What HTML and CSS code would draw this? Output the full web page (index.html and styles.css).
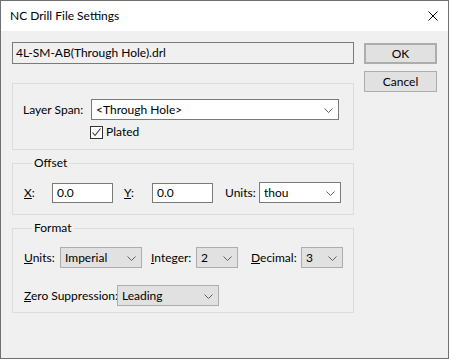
FILE: index.html
```html
<!DOCTYPE html>
<html lang="en">
<head>
    <meta charset="UTF-8">
    <title>NC Drill File Settings</title>
    <link rel="stylesheet" href="styles.css">
</head>
<body>
    <div class="window">
        <div class="titlebar">
            <span class="title">NC Drill File Settings</span>
            <svg class="close" width="10" height="10" viewBox="0 0 10 10">
                <path d="M0.5 0.5 L9.5 9.5 M9.5 0.5 L0.5 9.5" stroke="#000" stroke-width="1" fill="none"/>
            </svg>
        </div>
        <div class="content">
            <div class="main">
                <div class="filename">4L-SM-AB(Through Hole).drl</div>

                <div class="group span-group">
                    <div class="row">
                        <span class="label w-span">Layer Span:</span>
                        <div class="combo edit-combo w-layer">
                            <span>&lt;Through Hole&gt;</span>
                            <svg class="chev" width="9" height="5" viewBox="0 0 9 5"><path d="M0.5 0.5 L4.5 4.5 L8.5 0.5" stroke="#606060" fill="none"/></svg>
                        </div>
                    </div>
                    <div class="check-row">
                        <span class="checkbox">
                            <svg width="11" height="11" viewBox="0 0 11 11"><path d="M1.5 5.5 L4 8.5 L9.5 1.5" stroke="#333" stroke-width="1.1" fill="none"/></svg>
                        </span>
                        <span class="check-label">Plated</span>
                    </div>
                </div>

                <fieldset class="group offset-group">
                    <legend>Offset</legend>
                    <div class="row">
                        <span class="label w-xy"><u>X</u>:</span>
                        <div class="edit w-num">0.0</div>
                        <span class="label w-xy gap-y"><u>Y</u>:</span>
                        <div class="edit w-num">0.0</div>
                        <span class="label w-units gap-units">Units:</span>
                        <div class="combo edit-combo w-unitsbox">
                            <span>thou</span>
                            <svg class="chev" width="9" height="5" viewBox="0 0 9 5"><path d="M0.5 0.5 L4.5 4.5 L8.5 0.5" stroke="#606060" fill="none"/></svg>
                        </div>
                    </div>
                </fieldset>

                <fieldset class="group format-group">
                    <legend>Format</legend>
                    <div class="row">
                        <span class="label w-funits"><u>U</u>nits:</span>
                        <div class="combo list-combo w-imperial">
                            <span>Imperial</span>
                            <svg class="chev" width="9" height="5" viewBox="0 0 9 5"><path d="M0.5 0.5 L4.5 4.5 L8.5 0.5" stroke="#606060" fill="none"/></svg>
                        </div>
                        <span class="label w-int gap-int"><u>I</u>nteger:</span>
                        <div class="combo list-combo w-small">
                            <span>2</span>
                            <svg class="chev" width="9" height="5" viewBox="0 0 9 5"><path d="M0.5 0.5 L4.5 4.5 L8.5 0.5" stroke="#606060" fill="none"/></svg>
                        </div>
                        <span class="label w-dec gap-dec"><u>D</u>ecimal:</span>
                        <div class="combo list-combo w-small">
                            <span>3</span>
                            <svg class="chev" width="9" height="5" viewBox="0 0 9 5"><path d="M0.5 0.5 L4.5 4.5 L8.5 0.5" stroke="#606060" fill="none"/></svg>
                        </div>
                    </div>
                    <div class="row zero-row">
                        <span class="label w-zero"><u>Z</u>ero Suppression:</span>
                        <div class="combo list-combo w-zerobox">
                            <span>Leading</span>
                            <svg class="chev" width="9" height="5" viewBox="0 0 9 5"><path d="M0.5 0.5 L4.5 4.5 L8.5 0.5" stroke="#606060" fill="none"/></svg>
                        </div>
                    </div>
                </fieldset>
            </div>

            <div class="buttons">
                <button class="btn default">OK</button>
                <button class="btn">Cancel</button>
            </div>
        </div>
    </div>
</body>
</html>
```

FILE: styles.css
```css
* {
    margin: 0;
    padding: 0;
    box-sizing: border-box;
}

body {
    font-family: 'Lato', 'Segoe UI', sans-serif;
    font-size: 12px;
    line-height: 14px;
    color: #000000;
    background-color: #f0f0f0;
}

.window {
    width: 449px;
    height: 359px;
    border: 1px solid #707070;
    background-color: #f0f0f0;
    display: flex;
    flex-direction: column;
}

.titlebar {
    height: 30px;
    background-color: #ffffff;
    display: flex;
    align-items: center;
    justify-content: space-between;
    padding: 0 10px 0 9px;
}

.title {
    font-size: 12px;
    margin-top: -1px;
}

.close {
    display: block;
    margin-top: -1px;
}

.content {
    display: flex;
    gap: 10px;
    padding: 11px 10px 0 11px;
}

.main {
    width: 342px;
    display: flex;
    flex-direction: column;
}

.filename {
    height: 22px;
    border: 1px solid #7a7a7a;
    background-color: #f0f0f0;
    padding: 3px 3px 0 3px;
}

.group {
    border: 1px solid #dcdcdc;
    border-radius: 0;
}

.span-group {
    margin-top: 19px;
    padding: 15px 0 10px 10px;
}

fieldset.group {
    margin-top: 6px;
    min-width: 0;
}

legend {
    margin-left: 8px;
    padding: 0 2px;
    line-height: 14px;
}

.offset-group {
    padding: 12px 0 11px 11px;
}

.format-group {
    padding: 12px 0 6px 11px;
}

.row {
    display: flex;
    align-items: center;
}

.zero-row {
    margin-top: 17px;
}

.label {
    white-space: nowrap;
}

.w-span { width: 68px; }
.w-xy { width: 28px; }
.w-units { width: 34px; }
.w-funits { width: 36px; }
.w-int { width: 45px; }
.w-dec { width: 50px; }
.w-zero { width: 93px; }

.gap-y { margin-left: 11px; }
.gap-units { margin-left: 12px; }
.gap-int { margin-left: 9px; }
.gap-dec { margin-left: 13px; }

.edit {
    height: 20px;
    border: 1px solid #7a7a7a;
    background-color: #ffffff;
    padding: 2px 0 0 4px;
}

.w-num { width: 61px; }

.combo {
    height: 21px;
    display: flex;
    align-items: center;
    justify-content: space-between;
    padding: 1px 5px 0 4px;
}

.combo .chev {
    display: block;
}

.edit-combo {
    border: 1px solid #7a7a7a;
    background-color: #ffffff;
}

.list-combo {
    border: 1px solid #adadad;
    background-color: #e1e1e1;
}

.w-layer { width: 248px; }
.w-unitsbox { width: 82px; }
.w-imperial { width: 82px; }
.w-small { width: 42px; }
.w-zerobox { width: 102px; }

.check-row {
    display: flex;
    align-items: center;
    margin-top: 5px;
    margin-left: 67px;
}

.checkbox {
    width: 13px;
    height: 13px;
    border: 1px solid #333333;
    background-color: #ffffff;
    display: flex;
    align-items: center;
    justify-content: center;
}

.checkbox svg {
    display: block;
}

.check-label {
    margin-left: 3px;
}

.buttons {
    display: flex;
    flex-direction: column;
    gap: 7px;
    padding-top: 1px;
}

.btn {
    width: 73px;
    height: 21px;
    font-family: inherit;
    font-size: 12px;
    line-height: 14px;
    color: #000000;
    background-color: #e1e1e1;
    border: 1px solid #adadad;
    cursor: pointer;
}

.btn.default {
    border: 2px solid #adadad;
}
```
